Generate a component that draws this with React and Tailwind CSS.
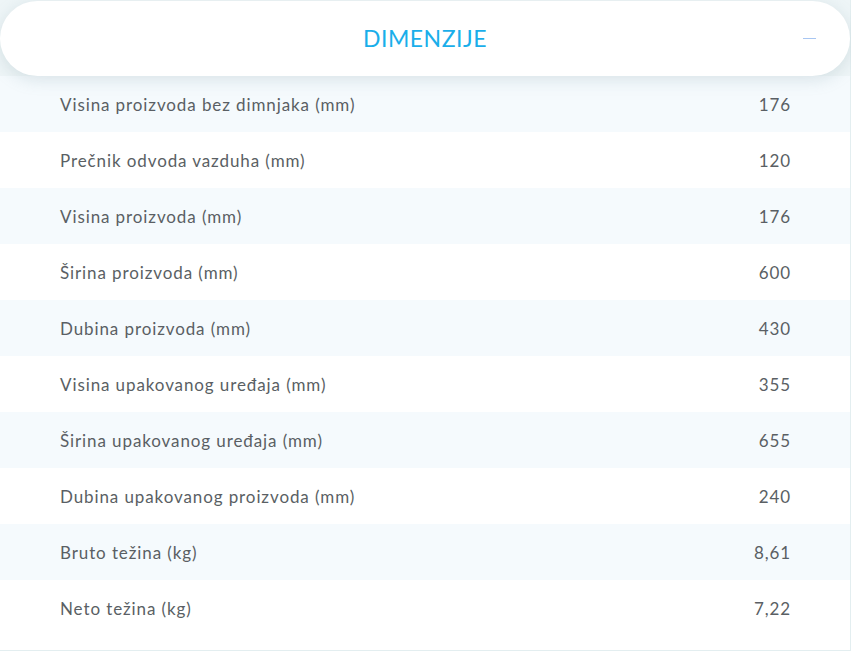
import React from 'react';

const rows = [
  ['Visina proizvoda bez dimnjaka (mm)', '176'],
  ['Prečnik odvoda vazduha (mm)', '120'],
  ['Visina proizvoda (mm)', '176'],
  ['Širina proizvoda (mm)', '600'],
  ['Dubina proizvoda (mm)', '430'],
  ['Visina upakovanog uređaja (mm)', '355'],
  ['Širina upakovanog uređaja (mm)', '655'],
  ['Dubina upakovanog proizvoda (mm)', '240'],
  ['Bruto težina (kg)', '8,61'],
  ['Neto težina (kg)', '7,22'],
];

export default function App() {
  return (
    <div className="w-[851px] h-[651px] bg-white" style={{ fontFamily: 'Lato, "Open Sans", sans-serif' }}>
      <div className="w-[851px] h-[651px] border-r border-b border-[#e3eef0] bg-white">
        <div className="bg-[#eef5f7] pt-px">
          <div className="relative h-[75px] rounded-full bg-white flex items-center justify-center shadow-[0_4px_16px_rgba(120,150,160,0.22)] z-10">
            <span className="text-[23px] text-[#1aaeea] tracking-[0.5px] font-normal">DIMENZIJE</span>
            <span className="absolute right-[34px] top-[37px] w-[13px] h-px bg-[#a8c6f2]" />
          </div>
        </div>
        <div>
          {rows.map(([label, value], i) => (
            <div
              key={label}
              className={`h-[56px] flex items-center justify-between pl-[60px] pr-[59px] pt-[2px] text-[17px] tracking-[0.9px] text-[#5a5f64] ${i % 2 === 0 ? 'bg-[#f5fafd]' : 'bg-white'}`}
            >
              <span>{label}</span>
              <span>{value}</span>
            </div>
          ))}
        </div>
      </div>
    </div>
  );
}
